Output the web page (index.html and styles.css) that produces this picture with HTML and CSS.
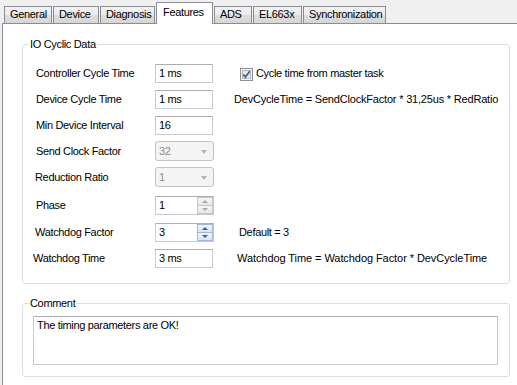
FILE: index.html
```html
<!DOCTYPE html>
<html>
<head>
<meta charset="utf-8">
<link rel="stylesheet" href="styles.css">
</head>
<body>
<div class="tabs">
  <div class="tab">General</div>
  <div class="tab">Device</div>
  <div class="tab">Diagnosis</div>
  <div class="tab active">Features</div>
  <div class="tab">ADS</div>
  <div class="tab">EL663x</div>
  <div class="tab">Synchronization</div>
</div>
<div class="panel">
  <div class="group io">
    <div class="group-title">IO Cyclic Data</div>
    <div class="rows">
      <div class="label">Controller Cycle Time</div>
      <div class="field"><div class="edit">1 ms</div></div>
      <div class="extra check-extra">
        <span class="checkbox"><svg width="13" height="13" viewBox="0 0 13 13"><rect x="0.5" y="0.5" width="12" height="12" fill="#f4f4f4" stroke="#8e8f8f"/><rect x="2.5" y="2.5" width="8" height="8" fill="#e4e8ef" stroke="#b5bac3"/><path d="M3.2 6.4 L5.4 9 L9.8 3.2" fill="none" stroke="#4a5f97" stroke-width="1.8"/></svg></span>
        <span>Cycle time from master task</span>
      </div>

      <div class="label">Device Cycle Time</div>
      <div class="field"><div class="edit">1 ms</div></div>
      <div class="extra note-dev">DevCycleTime = SendClockFactor * 31,25us * RedRatio</div>

      <div class="label">Min Device Interval</div>
      <div class="field"><div class="edit">16</div></div>
      <div class="extra"></div>

      <div class="label">Send Clock Factor</div>
      <div class="field"><div class="combo"><span>32</span><span class="arrow"></span></div></div>
      <div class="extra"></div>

      <div class="label nudge1">Reduction Ratio</div>
      <div class="field"><div class="combo"><span>1</span><span class="arrow"></span></div></div>
      <div class="extra"></div>

      <div class="label row-phase">Phase</div>
      <div class="field row-phase"><div class="spin"><span class="spin-text">1</span><span class="spin-btns"><span class="sb up"></span><span class="sb down"></span></span></div></div>
      <div class="extra row-phase"></div>

      <div class="label nudge1 row-wf">Watchdog Factor</div>
      <div class="field row-wf"><div class="spin hot"><span class="spin-text">3</span><span class="spin-btns"><span class="sb up"></span><span class="sb down"></span></span></div></div>
      <div class="extra note-def row-wf">Default = 3</div>

      <div class="label nudge3">Watchdog Time</div>
      <div class="field"><div class="edit">3 ms</div></div>
      <div class="extra note-wt">Watchdog Time = Watchdog Factor * DevCycleTime</div>
    </div>
  </div>
  <div class="group comment">
    <div class="group-title">Comment</div>
    <div class="memo">The timing parameters are OK!</div>
  </div>
</div>
</body>
</html>
```
FILE: styles.css
```css
html, body {
  margin: 0;
  padding: 0;
}
body {
  background: #f0f0f0;
  font-family: "Liberation Sans", Arial, sans-serif;
  font-size: 11px;
  letter-spacing: -0.33px;
  color: #000;
  width: 517px;
  height: 385px;
  overflow: hidden;
}
.tabs {
  display: flex;
  align-items: flex-end;
  height: 23px;
  padding-left: 4px;
}
.tab {
  box-sizing: border-box;
  height: 17px;
  line-height: 15px;
  padding-left: 5px;
  border: 1px solid #898c95;
  border-bottom: none;
  background: linear-gradient(#f3f3f3, #ebebeb 50%, #dddddd 51%, #d6d6d6);
  margin-right: 1px;
  white-space: nowrap;
}
.tab:nth-child(1) { width: 48px; }
.tab:nth-child(2) { width: 46px; }
.tab:nth-child(3) { width: 55px; }
.tab:nth-child(5) { width: 38px; margin-left: 1px; }
.tab:nth-child(6) { width: 49px; }
.tab:nth-child(7) { width: 83px; }
.tab.active {
  width: 57px;
  height: 22px;
  margin-bottom: -1px;
  margin-right: 0;
  line-height: 18px;
  padding-left: 6px;
  background: #fff;
  position: relative;
  z-index: 1;
}
.panel {
  background: #fff;
  border-top: 1px solid #898c95;
  border-left: 1px solid #898c95;
  margin-left: 2px;
  padding: 20px 7px 0 19px;
  height: 362px;
  box-sizing: border-box;
}
.group {
  border: 1px solid #d5dfe5;
  border-radius: 3px;
  box-sizing: border-box;
}
.group-title {
  width: fit-content;
  background: #fff;
  margin-top: -7px;
  margin-left: 6px;
  padding: 0 1px;
  line-height: 13px;
  height: 13px;
}
.io {
  height: 240px;
}
.comment {
  margin-top: 19px;
  height: 74px;
  width: 488px;
}
.rows {
  margin: 13px 10px 0 13px;
  display: grid;
  grid-template-columns: 119px 58px 1fr;
  row-gap: 7px;
  align-items: center;
}
.label {
  line-height: 13px;
  white-space: nowrap;
}
.nudge1 { margin-left: -1px; }
.nudge3 { margin-left: -3px; }
.row-phase { margin-top: 2px; }
.row-wf { margin-top: 1px; }
.field { height: 19px; }
.extra {
  white-space: nowrap;
  line-height: 13px;
}
.check-extra {
  display: flex;
  align-items: center;
  gap: 3px;
  margin-left: 27px;
}
.checkbox { display: block; height: 13px; margin-top: 1px; }
.checkbox svg { display: block; }
.note-dev { margin-left: 21px; letter-spacing: -0.19px; }
.note-def { margin-left: 26px; }
.note-wt { margin-left: 24px; letter-spacing: -0.07px; }
.edit {
  box-sizing: border-box;
  width: 58px;
  height: 19px;
  border: 1px solid #c6c9cf;
  border-top-color: #abadb3;
  padding-left: 3px;
  line-height: 17px;
  background: #fff;
}
.combo {
  box-sizing: border-box;
  width: 59px;
  height: 20px;
  border: 1px solid #c3c3c3;
  border-radius: 3px;
  background: #f4f4f4;
  color: #8a8a8a;
  padding-left: 3px;
  line-height: 18px;
  display: flex;
  justify-content: space-between;
  align-items: center;
  margin-top: -1px;
}
.arrow {
  width: 0;
  height: 0;
  border-left: 3.5px solid transparent;
  border-right: 3.5px solid transparent;
  border-top: 4px solid #b4b4b4;
  margin-right: 6px;
  margin-top: 1px;
}
.spin {
  box-sizing: border-box;
  width: 59px;
  height: 19px;
  border: 1px solid #c6c9cf;
  border-top-color: #abadb3;
  background: #fff;
  display: flex;
}
.spin-text {
  flex: 1;
  padding-left: 3px;
  line-height: 17px;
}
.spin-btns {
  width: 16px;
  display: flex;
  flex-direction: column;
}
.sb {
  flex: 1;
  box-sizing: border-box;
  border: 1px solid #c7c7c7;
  background: linear-gradient(#f6f6f6, #e6e6e6);
  display: flex;
  align-items: center;
  justify-content: center;
}
.sb.down { border-top: none; }
.sb::after {
  content: "";
  width: 0;
  height: 0;
  border-left: 3px solid transparent;
  border-right: 3px solid transparent;
}
.sb.up::after { border-bottom: 3px solid #a9a9a9; }
.sb.down::after { border-top: 3px solid #a9a9a9; }
.spin.hot .sb {
  border-color: #9cb8d6;
  background: linear-gradient(#eef5fd, #d7e8f9);
}
.spin.hot .sb.up::after { border-bottom-color: #3c5ea0; }
.spin.hot .sb.down::after { border-top-color: #3c5ea0; }
.memo {
  margin: 6px 11px 0 10px;
  box-sizing: border-box;
  height: 49px;
  border: 1px solid #c6c9cf;
  border-top-color: #abadb3;
  padding: 2px 3px;
  line-height: 13px;
}
```
